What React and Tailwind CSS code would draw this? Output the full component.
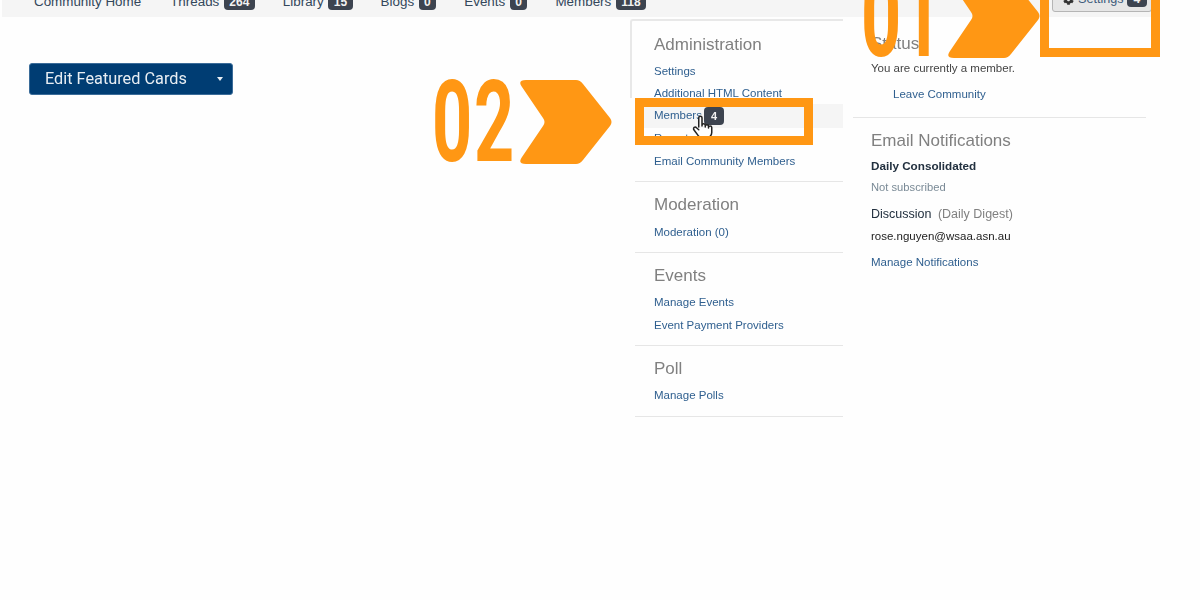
import { FaCog } from 'react-icons/fa';

const navItems = [
  { label: 'Threads', count: '264' },
  { label: 'Library', count: '15' },
  { label: 'Blogs', count: '0' },
  { label: 'Events', count: '0' },
  { label: 'Members', count: '118' },
];

function Badge({ children }) {
  return (
    <span className="ml-[4.5px] rounded-[4px] bg-[#3d4450] px-[5.5px] text-[12px] leading-[16px] font-bold text-[#f2f2f2]">{children}</span>
  );
}

function MenuLink({ children, className = '' }) {
  return <div className={`h-[22.4px] text-[11.5px] leading-[22.4px] text-[#2f5f8f] ${className}`}>{children}</div>;
}

function Heading({ children }) {
  return <div className="text-[17px] leading-[24px] text-[#808080]">{children}</div>;
}

function Arrow({ className }) {
  return (
    <svg viewBox="0 0 92 84" className={className} fill="#ff9714">
      <path d="M6 0H56Q60 0 63 4L90 38Q93 42 90 46L63 80Q60 84 56 84H6Q-3 84 2 77L23 46Q26 42 23 38L2 7Q-3 0 6 0Z" />
    </svg>
  );
}

export default function App() {
  return (
    <div className="relative h-[600px] w-[1200px] overflow-hidden bg-[#fefefe] font-['Liberation_Sans',sans-serif]">
      <div className="blur-[0.5px]">
        {/* Top nav, cut off by the top of the frame */}
        <div className="ml-[2px] flex h-[17px] w-[1150px] items-end justify-between overflow-hidden bg-[#f5f5f5] pb-[5px] pl-[32px]">
          <div className="mb-[2px] flex items-end gap-[28px] text-[13.4px] leading-[16px] text-[#33475b]">
            <span className="mr-[1px]">Community Home</span>
            {navItems.map(item => (
              <span key={item.label} className="flex items-end">
                {item.label}
                <Badge>{item.count}</Badge>
              </span>
            ))}
          </div>
          <div className="flex h-[24px] w-[100px] items-end rounded-[3px] border border-[#b5b5b5] bg-[#e6e6e6] pb-[4px] pl-[10px] text-[12.6px] leading-[16px] text-[#3d5a7a]">
            <FaCog size={11} className="mb-[2px] mr-[4px] text-[#333]" />
            Settings
            <span className="ml-[3px] rounded-[4px] bg-[#3d4450] px-[7px] text-[12px] leading-[16px] font-bold text-[#f2f2f2]">4</span>
          </div>
        </div>

        <div className="pl-[29px] pt-[46px]">
          <button className="flex h-[32px] w-[204px] items-center justify-between rounded-[3px] border border-[#3b6c99] bg-[#003d73] pl-[15px] pr-[9px] font-['Roboto',sans-serif] text-[16.3px] text-[#e8eef3]">
            Edit Featured Cards
            <span className="h-0 w-0 border-x-[3px] border-t-[4px] border-x-transparent border-t-[#e8eef3]" />
          </button>
        </div>

        {/* Settings dropdown */}
        <div className="absolute left-[630px] top-[19px] flex">
          <div className="w-[213px]">
            <div className="h-[79px] rounded-tl-[3px] border-l-2 border-t-2 border-[#e8e8e8] pl-[22px] pt-[12px]">
              <Heading>Administration</Heading>
              <div className="pt-[3px]">
                <MenuLink>Settings</MenuLink>
              </div>
              <MenuLink>Additional HTML Content</MenuLink>
            </div>
            <div className="ml-[5px] border-b border-[#e6e6e6] pb-[8px]">
              <div className="mt-[6px] flex h-[24px] items-center bg-[#f5f5f5] pl-[19px] text-[11.5px] text-[#2f5f8f]">
                Members
                <span className="ml-[2px] rounded-[4px] bg-[#3d4450] px-[7px] text-[11px] leading-[18px] font-bold text-[#f2f2f2]">4</span>
              </div>
              <MenuLink className="-mt-[1px] pl-[19px]">Reports</MenuLink>
              <MenuLink className="mt-[1px] pl-[19px]">Email Community Members</MenuLink>
            </div>
            <div className="ml-[5px] border-b border-[#e6e6e6] pb-[9px] pl-[19px] pt-[11px]">
              <Heading>Moderation</Heading>
              <div className="pt-[4px]">
                <MenuLink>Moderation (0)</MenuLink>
              </div>
            </div>
            <div className="ml-[5px] border-b border-[#e6e6e6] pb-[9px] pl-[19px] pt-[11px]">
              <Heading>Events</Heading>
              <div className="pt-[3px]">
                <MenuLink>Manage Events</MenuLink>
                <MenuLink className="h-[22px]">Event Payment Providers</MenuLink>
              </div>
            </div>
            <div className="ml-[5px] border-b border-[#e6e6e6] pb-[10px] pl-[19px] pt-[11px]">
              <Heading>Poll</Heading>
              <div className="pt-[3px]">
                <MenuLink>Manage Polls</MenuLink>
              </div>
            </div>
          </div>

          <div className="ml-[10px] w-[293px] pt-[13px]">
            <div className="border-b border-[#e6e6e6] pb-[12px] pl-[18px]">
              <Heading>Status</Heading>
              <div className="mt-[2px] text-[11.5px] leading-[20px] text-[#444]">You are currently a member.</div>
              <MenuLink className="mt-[5px] pl-[22px]">Leave Community</MenuLink>
            </div>
            <div className="pl-[18px] pt-[11px]">
              <Heading>Email Notifications</Heading>
              <div className="mt-[1px] text-[11.7px] leading-[24px] font-bold text-[#22303f]">Daily Consolidated</div>
              <div className="-mt-[1px] text-[11.2px] leading-[20px] text-[#7a8a96]">Not subscribed</div>
              <div className="mt-[5px] text-[12.5px] leading-[24px] font-medium text-[#22303f]">
                Discussion <span className="ml-[3px] font-normal text-[#808080]">(Daily Digest)</span>
              </div>
              <div className="text-[11.5px] leading-[20px] text-[#222]">rose.nguyen@wsaa.asn.au</div>
              <MenuLink className="mt-[5px]">Manage Notifications</MenuLink>
            </div>
          </div>
        </div>
      </div>

      {/* Hand cursor */}
      <svg viewBox="0 0 24 24" className="absolute left-[689px] top-[113px] h-[28px] w-[26px]" fill="#fff" stroke="#222" strokeWidth="1.4" strokeLinecap="round" strokeLinejoin="round">
        <path d="M9 12V3.5a1.5 1.5 0 0 1 3 0V11M12 10.5a1.5 1.5 0 0 1 3 0V12M15 11.5a1.5 1.5 0 0 1 3 0V13M18 12.5a1.5 1.5 0 0 1 3 0V17a5 5 0 0 1-5 5h-3.500a5 5 0 0 1-4-2l-4-5.500a1.500 1.500 0 0 1 2.400-1.800L9 14.500" />
      </svg>

      {/* Orange video annotations */}
      <div className="absolute left-[1040px] top-[-20px] h-[77px] w-[120px] border-[9px] border-[#ff9714]" />
      <div className="absolute left-[635px] top-[98px] h-[47px] w-[178px] border-[9px] border-[#ff9714]" />
      <Arrow className="absolute left-[520px] top-[80px] h-[84px] w-[92px]" />
      <Arrow className="absolute left-[948px] top-[-26px] h-[84px] w-[92px]" />
      <div className="absolute left-[432px] top-[57px] origin-left scale-x-[0.62] font-['Roboto',sans-serif] text-[113px] leading-[132px] font-bold tracking-[3px] text-[#ff9714]">02</div>
      <div className="absolute left-[861px] top-[-48px] origin-left scale-x-[0.62] font-['Roboto',sans-serif] text-[113px] leading-[132px] font-bold tracking-[0px] text-[#ff9714]">01</div>
    </div>
  );
}
